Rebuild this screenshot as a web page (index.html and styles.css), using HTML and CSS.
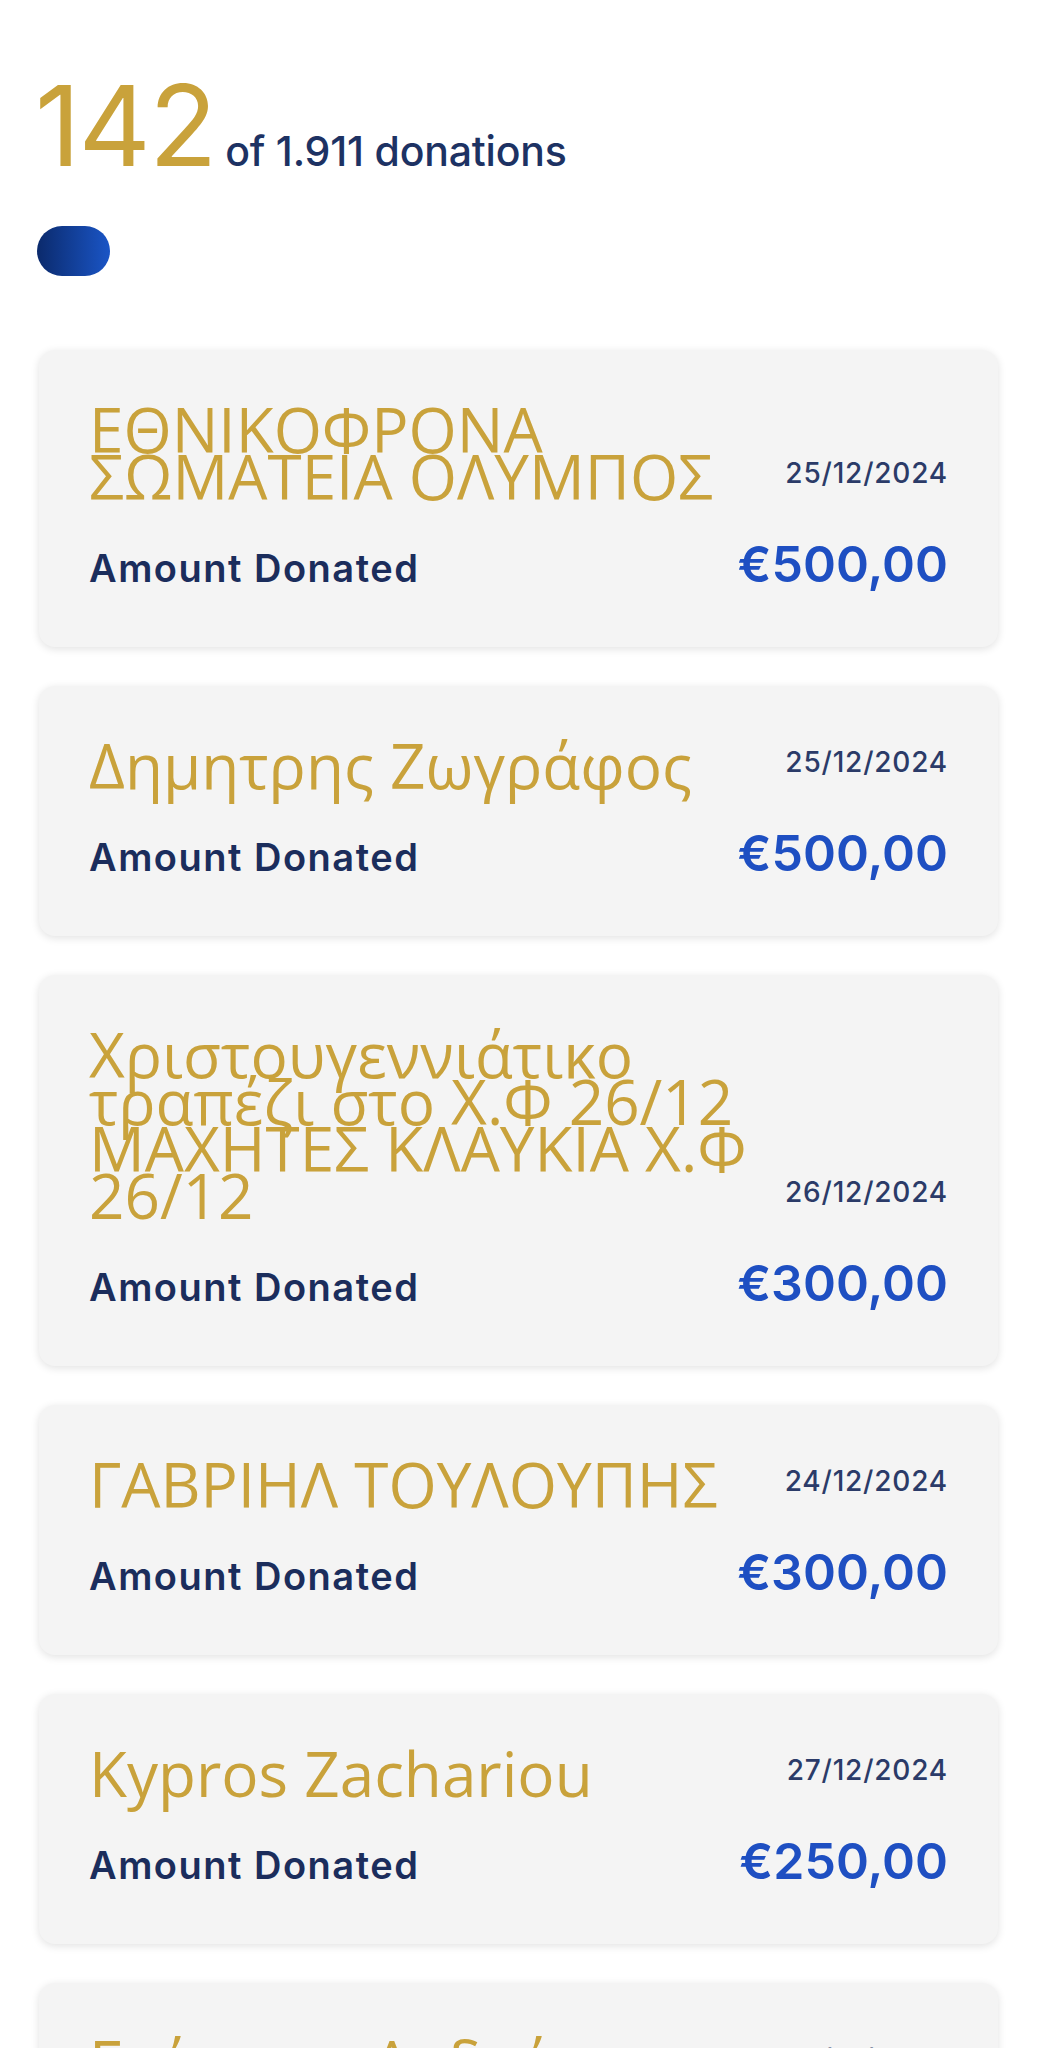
FILE: index.html
```html
<!DOCTYPE html>
<html lang="el">

<head>
    <meta charset="UTF-8">
    <meta name="viewport" content="width=device-width, initial-scale=1.0">
    <title>Donations</title>
    <link rel="stylesheet" href="styles.css">
</head>

<body>
    <div class="summary">
        <span class="count">142</span>
        <span class="total">of 1.911 donations</span>
    </div>

    <div class="pill"></div>

    <div class="list">
        <div class="card">
            <div class="card-top">
                <div class="name">ΕΘΝΙΚΟΦΡΟΝΑ ΣΩΜΑΤΕΙΑ ΟΛΥΜΠΟΣ</div>
                <div class="date">25/12/2024</div>
            </div>
            <div class="card-bottom">
                <span class="label">Amount Donated</span>
                <span class="amount">€500,00</span>
            </div>
        </div>

        <div class="card">
            <div class="card-top">
                <div class="name">Δημητρης Ζωγράφος</div>
                <div class="date">25/12/2024</div>
            </div>
            <div class="card-bottom">
                <span class="label">Amount Donated</span>
                <span class="amount">€500,00</span>
            </div>
        </div>

        <div class="card">
            <div class="card-top">
                <div class="name">Χριστουγεννιάτικο τραπέζι στο Χ.Φ 26/12 ΜΑΧΗΤΕΣ ΚΛΑΥΚΙΑ Χ.Φ 26/12</div>
                <div class="date">26/12/2024</div>
            </div>
            <div class="card-bottom">
                <span class="label">Amount Donated</span>
                <span class="amount">€300,00</span>
            </div>
        </div>

        <div class="card">
            <div class="card-top">
                <div class="name">ΓΑΒΡΙΗΛ ΤΟΥΛΟΥΠΗΣ</div>
                <div class="date">24/12/2024</div>
            </div>
            <div class="card-bottom">
                <span class="label">Amount Donated</span>
                <span class="amount">€300,00</span>
            </div>
        </div>

        <div class="card">
            <div class="card-top">
                <div class="name">Kypros Zachariou</div>
                <div class="date">27/12/2024</div>
            </div>
            <div class="card-bottom">
                <span class="label">Amount Donated</span>
                <span class="amount">€250,00</span>
            </div>
        </div>

        <div class="card">
            <div class="card-top">
                <div class="name">Γεώργιος Ανδρέου</div>
                <div class="date">23/12/2024</div>
            </div>
            <div class="card-bottom">
                <span class="label">Amount Donated</span>
                <span class="amount">€200,00</span>
            </div>
        </div>
    </div>
</body>

</html>
```

FILE: styles.css
```css
body {
    margin: 0;
    padding: 69px 39px 40px;
    background-color: #fff;
    font-family: 'Inter', 'Noto Sans', sans-serif;
    color: #1b2d5c;
}

.summary {
    display: flex;
    align-items: baseline;
    gap: 10px;
    margin-left: -4px;
}

.count {
    font-size: 112px;
    line-height: 1;
    font-weight: 400;
    letter-spacing: -2px;
    color: #c9a23b;
}

.total {
    font-size: 41px;
    font-weight: 500;
    letter-spacing: -0.2px;
    color: #1d3263;
}

.pill {
    width: 73px;
    height: 50px;
    margin-top: 45px;
    margin-left: -2px;
    border-radius: 25px;
    background: linear-gradient(90deg, #0b2a6c, #1a55c6);
}

.list {
    display: flex;
    flex-direction: column;
    gap: 39px;
    margin-top: 74px;
}

.card {
    background-color: #f4f4f4;
    border-radius: 16px;
    box-shadow: 0 2px 8px rgba(0, 0, 0, 0.12);
    padding: 56px 50px 53px;
}

.card-top {
    display: flex;
    justify-content: space-between;
    align-items: flex-end;
    gap: 24px;
}

.name {
    font-family: 'Open Sans', 'Noto Sans', sans-serif;
    font-size: 62px;
    line-height: 47px;
    color: #c9a23b;
    max-width: 690px;
}

.date {
    font-size: 28px;
    line-height: 28px;
    font-weight: 500;
    letter-spacing: 0.8px;
    color: #2b3b68;
    margin-bottom: 13px;
    white-space: nowrap;
}

.card-bottom {
    display: flex;
    justify-content: space-between;
    align-items: baseline;
    margin-top: 34px;
}

.label {
    font-size: 38px;
    font-weight: 600;
    letter-spacing: 1.5px;
    color: #1b2d5c;
}

.amount {
    font-size: 50px;
    line-height: 60px;
    font-weight: 600;
    color: #1e4fc2;
}
```
